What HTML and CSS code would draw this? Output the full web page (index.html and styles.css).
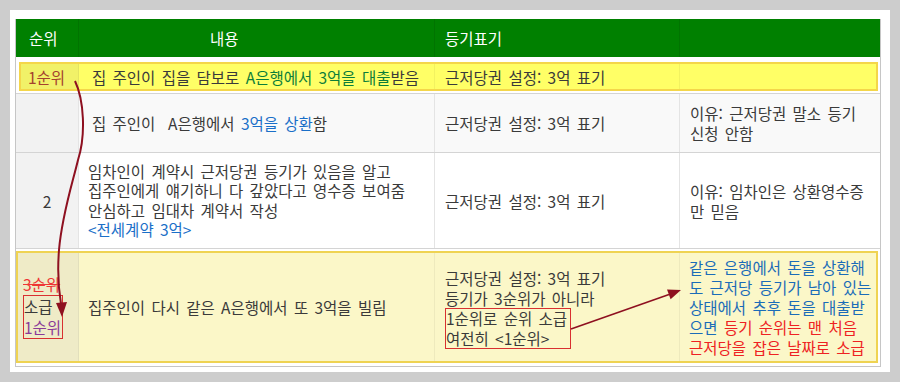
FILE: index.html
```html
<!DOCTYPE html>
<html lang="ko">
<head>
<meta charset="utf-8">
<title>근저당 순위</title>
<link rel="stylesheet" href="styles.css">
</head>
<body>
<div class="page">
  <div class="panel">
    <div class="table">
      <div class="row head grid">
        <div class="cell h1"><div>순위</div></div>
        <div class="cell h2"><div>내용</div></div>
        <div class="cell h3"><div>등기표기</div></div>
        <div class="cell h4"></div>
      </div>

      <div class="row r1">
        <div class="hl1">
          <div class="cell c1 rank1"><div>1순위</div></div>
          <div class="cell c2 indent"><div>집 주인이 집을 담보로 <span class="green">A은행에서 3억을 대출</span>받음</div></div>
          <div class="cell c3"><div>근저당권 설정: 3억 표기</div></div>
          <div class="cell c4"></div>
        </div>
      </div>

      <div class="row r2 grid">
        <div class="cell c1"></div>
        <div class="cell c2 indent"><div>집 주인이&nbsp; A은행에서 <span class="blue">3억을 상환</span>함</div></div>
        <div class="cell c3"><div>근저당권 설정: 3억 표기</div></div>
        <div class="cell c4"><div>이유: 근저당권 말소 등기<br>신청 안함</div></div>
      </div>

      <div class="row r3 grid">
        <div class="cell c1 center"><div>2</div></div>
        <div class="cell c2 tight"><div>임차인이 계약시 근저당권 등기가 있음을 알고<br>집주인에게 얘기하니 다 갚았다고 영수증 보여줌<br>안심하고 임대차 계약서 작성<br><span class="blue">&lt;전세계약 3억&gt;</span></div></div>
        <div class="cell c3"><div>근저당권 설정: 3억 표기</div></div>
        <div class="cell c4"><div>이유: 임차인은 상환영수증<br>만 믿음</div></div>
      </div>

      <div class="row r4">
        <div class="hl4">
          <div class="cell c1 rank4">
            <div class="strike">3순위</div>
            <div class="redbox small">소급<br><span class="purple">1순위</span></div>
          </div>
          <div class="cell c2"><div>집주인이 다시 같은 A은행에서 또 3억을 빌림</div></div>
          <div class="cell c3 col3-4">
            <div>근저당권 설정: 3억 표기<br>등기가 3순위가 아니라</div>
            <div class="redbox wide">1순위로 순위 소급<br>여전히 &lt;1순위&gt;</div>
          </div>
          <div class="cell c4 note"><div><span class="blue2">같은 은행에서 돈을 상환해<br>도 근저당 등기가 남아 있는<br>상태에서 추후 돈을 대출받<br>으면&nbsp;</span><span class="red">등기 순위는 맨 처음<br>근저당을 잡은 날짜로 소급</span></div></div>
        </div>
      </div>
    </div>
  </div>

  <svg class="arrows" width="900" height="382" viewBox="0 0 900 382" xmlns="http://www.w3.org/2000/svg">
    <path d="M75,81 C84,100 86,135 78,160 C72,185 62,215 59,250 C57,275 59,292 61,304" fill="none" stroke="#8e1020" stroke-width="2"/>
    <polygon points="56,303 67,302 62,317" fill="#8e1020"/>
    <line x1="571" y1="329" x2="669" y2="294.5" stroke="#8e1020" stroke-width="1.6"/>
    <polygon points="681,290 667,289.4 670.6,299.2" fill="#8e1020"/>
  </svg>
</div>
</body>
</html>
```

FILE: styles.css
```css
html, body {
  margin: 0;
  padding: 0;
}

body {
  background: #cdcdcd;
  font-family: "Noto Sans CJK KR", "Noto Sans", sans-serif;
  font-size: 15.5px;
  word-spacing: 2px;
  color: #3a3a3a;
}

.page {
  position: relative;
  width: 900px;
  height: 382px;
  padding: 10px;
  box-sizing: border-box;
}

.panel {
  background: #fff;
  padding: 9px 9px 5px 5px;
}

.table {
  border: 1px solid #c6c6c6;
  border-top: 0;
}

.grid {
  display: grid;
  grid-template-columns: 63px 356px 245px 200px;
}

.row {
  box-sizing: border-box;
  border-bottom: 1px solid #d4d4d4;
}

.cell {
  display: flex;
  flex-direction: column;
  justify-content: center;
  line-height: 20px;
  white-space: nowrap;
  box-sizing: border-box;
}

/* header */
.head {
  background: #008000;
  color: #fff;
  height: 38px;
  border-bottom: 0;
}

.head .cell {
  border-right: 1px solid rgba(0, 0, 0, 0.09);
}

.head .h4 {
  border-right: 0;
}

.h1 { padding-left: 13px; }
.h2 { padding-left: 131px; }
.h3 { padding-left: 10px; }

/* common columns */
.c1 { padding-left: 7px; }
.c2 { padding-left: 9px; }
.c3 { padding-left: 10px; }
.c4 { padding-left: 10px; }

.c2.indent { padding-left: 13px; }

.r2 .cell,
.r3 .cell {
  border-right: 1px solid #e4e4e4;
}

.r2 .c4,
.r3 .c4 {
  border-right: 0;
}

.center {
  align-items: center;
  padding-left: 0;
}

/* row 1 (highlighted) */
.r1 {
  height: 37px;
  padding: 5px 2px 2px 3px;
}

.hl1 {
  display: grid;
  grid-template-columns: 58px 356px 245px 196px;
  height: 29px;
  box-sizing: border-box;
  border: 2px solid #f4d64a;
  background: #ffff66;
}

.hl1 .cell {
  border-right: 1px solid rgba(0, 0, 0, 0.05);
}

.hl1 .c4 {
  border-right: 0;
}

.hl1 .c1 {
  background: #f1f168;
}

.rank1 {
  color: #a4412e;
}

/* row 2 */
.r2 {
  height: 59px;
  background: #f9f9f9;
}

.r2 .c1,
.r3 .c1 {
  background: #f2f2f2;
}

/* row 3 */
.r3 {
  height: 96px;
}

.tight {
  line-height: 19.3px;
}

/* row 4 */
.r4 {
  height: 117px;
  padding: 2px 2px 3px 0;
  border-bottom: 0;
}

.hl4 {
  display: grid;
  grid-template-columns: 61px 356px 245px 196px;
  height: 112px;
  box-sizing: border-box;
  border: 2px solid #efd352;
  background: #fbf7c8;
}

.hl4 .cell {
  border-right: 1px solid rgba(0, 0, 0, 0.05);
}

.hl4 .c4 {
  border-right: 0;
}

.hl4 .c1 {
  background: #efebc7;
  padding-left: 5px;
  align-items: flex-start;
}

.hl4 .c4 {
  padding-left: 9px;
}

.rank4 .strike {
  color: #ee3535;
  text-decoration: line-through;
  line-height: 20px;
  margin-bottom: 1px;
}

.redbox {
  border: 1px solid #d83030;
}

.redbox.small {
  line-height: 21px;
  padding-right: 1px;
  margin-bottom: 2px;
}

.col3-4 {
  align-items: flex-start;
  padding-top: 3px;
}

.redbox.wide {
  line-height: 19.5px;
  padding-right: 3px;
}

.note {
  line-height: 20px;
}

/* colours */
.green { color: #0c7d3a; }
.blue { color: #1a6fc8; }
.blue2 { color: #1a6cb8; }
.red { color: #ee2222; }
.purple { color: #8a3a98; }

/* overlay arrows */
.arrows {
  position: absolute;
  top: 0;
  left: 0;
  pointer-events: none;
}
```
